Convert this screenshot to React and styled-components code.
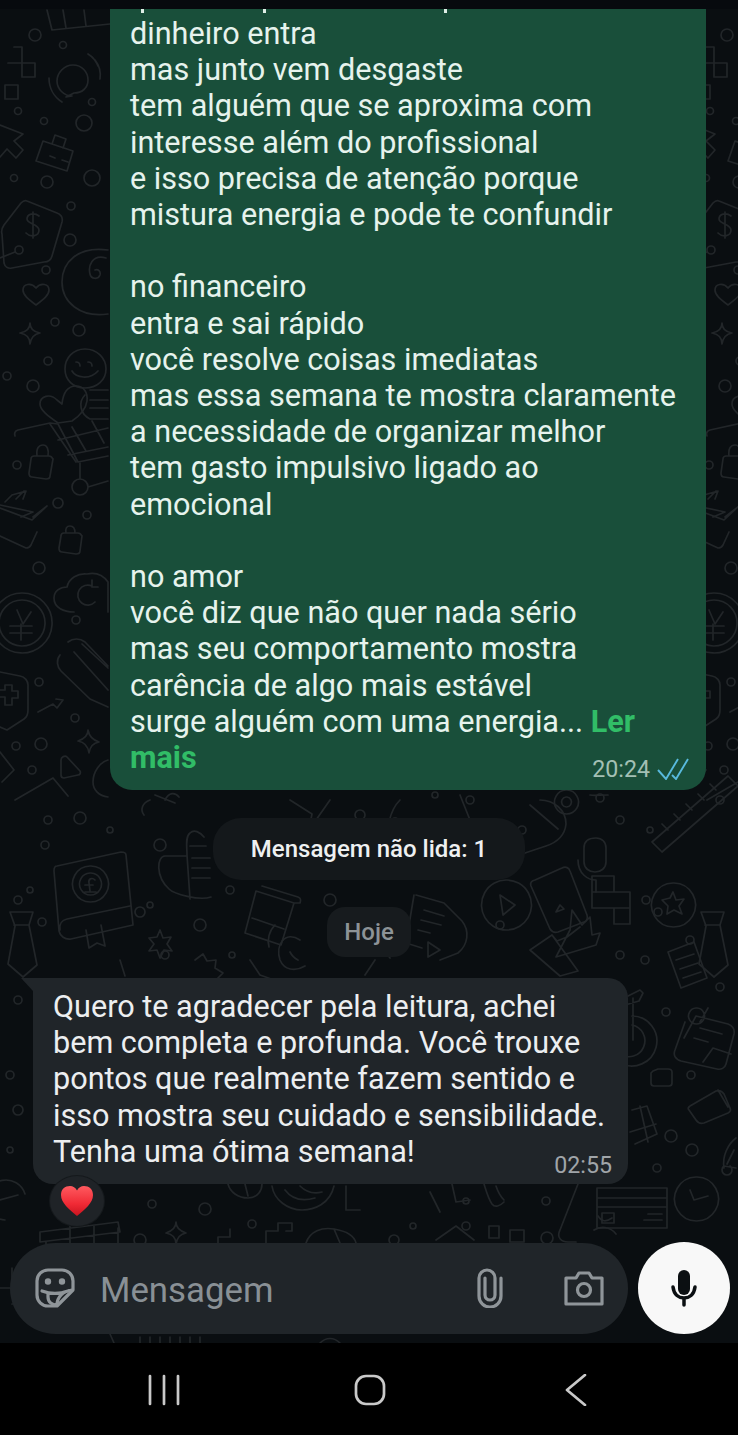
import styled, { createGlobalStyle } from "styled-components";

const GlobalStyle = createGlobalStyle`
  html, body {
    margin: 0;
    padding: 0;
    background: #000;
  }
  * {
    box-sizing: border-box;
  }
`;

const Page = styled.div`
  position: relative;
  width: 738px;
  height: 1435px;
  overflow: hidden;
  display: flex;
  flex-direction: column;
  background: #0a0e11;
  font-family: Roboto, "Liberation Sans", sans-serif;
`;

const Wallpaper = styled.svg`
  position: absolute;
  inset: 0;
  width: 738px;
  height: 1435px;
  fill: none;
  stroke: #222629;
  stroke-width: 1.7;
  stroke-linecap: round;
  stroke-linejoin: round;
`;

const TopStrip = styled.div`
  position: relative;
  height: 9px;
  flex: none;
  background: #070a0e;
`;

const Chat = styled.main`
  position: relative;
  flex: none;
  height: 1233px;
  display: flex;
  flex-direction: column;
`;

const OutBubble = styled.div`
  position: relative;
  align-self: flex-end;
  width: 596px;
  height: 781px;
  margin-right: 32px;
  padding: 7px 20px 0;
  background: #194f3a;
  border-radius: 0 0 22px 22px;
`;

const Descender = styled.span`
  position: absolute;
  top: 0;
  left: ${(p) => p.$left}px;
  width: 3px;
  height: 4px;
  background: #dfeee7;
`;

const Body = styled.div`
  font-size: 30.6px;
  line-height: 36.2px;
  white-space: pre-line;
  color: ${(p) => (p.$incoming ? "#eceef0" : "#e6f3ed")};
`;

const ReadMore = styled.span`
  font-weight: 700;
  color: #31bd67;
`;

const Meta = styled.div`
  position: absolute;
  right: ${(p) => p.$right}px;
  bottom: ${(p) => p.$bottom}px;
  display: flex;
  align-items: center;
  gap: 7px;
  font-size: 23.2px;
  line-height: 26px;
  color: ${(p) => p.$color};
`;

const Pill = styled.div`
  align-self: center;
  display: flex;
  align-items: center;
  justify-content: center;
  flex: none;
  font-weight: 500;
`;

const UnreadPill = styled(Pill)`
  width: 312px;
  height: 62px;
  margin-top: 28px;
  border-radius: 28px;
  background: #14181b;
  color: #eef0f1;
  font-size: 24px;
`;

const DatePill = styled(Pill)`
  width: 84px;
  height: 50px;
  margin-top: 27px;
  border-radius: 18px;
  background: #171b1e;
  color: #8d9397;
  font-size: 24px;
`;

const InBubble = styled.div`
  position: relative;
  width: 595px;
  height: 206px;
  margin: 21px 0 0 33px;
  padding: 11px 20px 0;
  background: #202529;
  border-radius: 0 20px 20px 20px;
  &::before {
    content: "";
    position: absolute;
    top: 0;
    left: -12px;
    border-top: 13px solid #202529;
    border-left: 12px solid transparent;
  }
`;

const Reaction = styled.div`
  position: relative;
  width: 54px;
  height: 50px;
  margin: -8px 0 0 50px;
  display: flex;
  align-items: center;
  justify-content: center;
  border-radius: 50%;
  background: #1f2327;
  box-shadow: 0 0 0 1px #15191c;
`;

const Composer = styled.div`
  position: relative;
  flex: none;
  height: 92px;
  padding: 0 8px 0 10px;
  display: flex;
  align-items: flex-end;
  gap: 10px;
`;

const InputBar = styled.div`
  width: 618px;
  height: 91px;
  padding: 0 24px 1px 25px;
  display: flex;
  align-items: center;
  border-radius: 46px;
  background: #202529;
`;

const Placeholder = styled.span`
  flex: 1;
  margin: 3px 0 0 25px;
  font-size: 34.8px;
  color: #899095;
`;

const IconSlot = styled.svg`
  flex: none;
  fill: none;
  stroke: #8f9599;
  stroke-width: 3.2;
  stroke-linecap: round;
  stroke-linejoin: round;
  margin-left: ${(p) => p.$gap || 0}px;
`;

const MicButton = styled.div`
  width: 92px;
  height: 92px;
  flex: none;
  display: flex;
  align-items: center;
  justify-content: center;
  border-radius: 50%;
  background: #f8f8f8;
`;

const NavBar = styled.nav`
  position: relative;
  flex: none;
  height: 92px;
  margin-top: 9px;
  padding: 2px 0 0 61px;
  display: grid;
  grid-template-columns: repeat(3, 206px);
  align-items: center;
  justify-items: center;
  background: #000;
`;

const NavIcon = styled.svg`
  fill: none;
  stroke: #c9c9c9;
  stroke-width: 2.7;
  stroke-linecap: round;
  stroke-linejoin: round;
`;

const rings = [
  [35, 35, 6], [63, 45, 3.5], [18, 111, 3.5], [44, 121, 3.5], [84, 123, 8], [92, 102, 3.5],
  [14, 178, 3.5], [47, 182, 6], [92, 178, 8], [71, 206, 4], [70, 240, 6], [46, 270, 4],
  [19, 250, 4], [55, 322, 4], [79, 330, 6], [48, 361, 4], [33, 386, 6], [7, 376, 4],
  [17, 465, 4], [87, 515, 4], [58, 503, 5], [39, 568, 6], [76, 620, 4], [39, 682, 4],
  [16, 746, 4], [41, 744, 6], [32, 770, 4], [75, 718, 4],
];

const centerRings = [
  [48, 820, 4], [80, 818, 6], [110, 830, 3], [45, 845, 4], [160, 845, 6], [30, 890, 3],
  [18, 900, 4], [42, 922, 4], [140, 912, 5], [150, 905, 3], [165, 955, 4], [200, 925, 6],
  [230, 890, 4], [232, 955, 3], [420, 850, 4], [465, 865, 6], [500, 925, 4], [522, 830, 4],
  [646, 900, 4], [620, 955, 4], [645, 960, 4], [690, 940, 4], [658, 912, 4], [650, 830, 3],
  [300, 850, 4], [330, 900, 6], [620, 820, 4], [395, 822, 4], [360, 815, 5], [470, 800, 4],
  [435, 795, 3], [720, 800, 4], [600, 798, 4],
];

const lowerRings = [
  [666, 1012, 4], [720, 987, 4], [691, 1075, 4], [671, 1136, 6], [692, 1150, 6], [657, 1168, 4],
  [152, 1204, 4], [205, 1209, 6], [252, 1224, 4], [140, 1240, 6], [466, 1226, 4], [546, 1201, 4],
  [466, 1201, 3], [413, 1226, 3], [394, 1240, 5], [547, 1238, 6], [18, 1000, 4], [10, 1150, 3],
  [10, 1075, 4], [18, 1110, 5],
];

// left side doodles, the wallpaper repeats about every 692px so they get drawn twice
const leftDoodles = [
  "M47 10l5 20 58-6M66 28l-3-18M86 26l-2-16",
  "M14 47h8v16h13v14H22V63H8M5 85h13v14H5z",
  "M72 96c-8 0-15-7-15-15s7-16 16-16 15 7 15 15-6 13-14 13l-8 4zM49 78c0 10 5 19 13 24M95 60c4 5 6 12 5 19M88 54c5 3 8 7 10 12",
  "M0 125l23 9-9 7 9 9-7 8-9-9-7 8",
  "M43 141l30 10-6 20-31-10zM52 144l3-9 11 4-3 9M50 156l5 2M62 160l6 2",
  "M27 201l30 12c5 2 6 5 5 9l-10 34c-1 4-4 6-8 6l-32 6c-4 1-7-1-8-5L2 234c-1-3 0-6 2-9l17-22c2-2 4-3 6-2z",
  "M39 216c-5-4-12-2-12 3s12 5 12 11-8 8-13 3M33 212v26",
  "M0 258l15-6",
  "M36 305c-8-6-13-10-13-15 0-6 8-8 13-2 5-6 13-4 13 2 0 5-5 9-13 15z",
  "M30 323c0 6-4 9-10 10 6 1 10 4 10 11 1-7 4-10 10-11-6-1-10-4-10-10z",
  "M108 250c-30-4-46 12-46 32s18 36 46 32M106 258c-14-4-18 8-16 16 1 5 8 6 10 1 1-4-2-6-5-5",
  "M85 349c-12 0-20 9-20 20s8 19 20 19 21-8 21-19-9-20-21-20zM76 362c3 0 4 2 4 4M88 362c3 0 4 2 4 4M72 371c4 7 18 9 26 0",
  "M58 423c-10-7-18-13-18-19 0-8 10-11 17-4l5 4c1-10 4-18 14-18 8 0 12 7 11 15-1 7-6 14-15 20z",
  "M85 395c-7 7-5 19 5 24h18M90 390h18M90 400h18M90 408h18",
  "M15 436c-1-3 0-5 3-6l32-7 8 1 20 38 30-6M50 424l26 38M58 440l50-12M68 455l40-8M72 427l14 24M92 421l12 22",
  "M80 463v16M72 487a8 8 0 1 0 16 0 8 8 0 1 0-16 0M88 487l20-6",
  "M34 456h15c2 0 3 1 4 3l-3 17c0 2-2 3-4 3l-14-2c-2 0-3-2-3-4l2-14c0-2 2-3 3-3zM37 456c-1-8 2-11 6-11s6 4 5 11",
  "M12 495l14-4-3 8M12 495l-7 7M24 491l-8 8",
  "M0 505l33 7-12 5M33 517l14-11-15 14-32-12M0 536l26 12c2 0 4-1 5-3l6-13",
  "M64 533h14c2 0 3 1 4 3l-2 15c0 2-2 3-4 3l-14-2c-2 0-3-2-3-4l2-12c0-2 1-3 3-3zM66 533c-1-5 1-7 4-7s5 2 5 7",
  "M74 612c-10 0-20-4-20-14 0-7 6-11 13-11 2-9 11-14 20-13 9-2 16 1 21 8v30",
  "M92 586a10 10 0 1 0 3 16M92 580v7h6",
  "M22 593a30 30 0 1 0 30 32 30 30 0 0 0-30-32zM22 600a23 23 0 1 0 23 24 23 23 0 0 0-23-24z",
  "M17 610l6 14 8-12M10 626h22M10 633h22M21 624v16",
  "M68 642c5-4 12-4 17 0l23 24M60 655c-4 5-3 12 1 16l29 28 18 8M74 652l34 38M82 644l26 24",
  "M0 672l20 4c5 1 8 5 8 9v25c0 4-1 7-4 9l-17 11-7-3M0 690h5v-5h7v6h6v7h-6v7H5v-8H0",
  "M38 712l15-8 4 4 6-8-7-1",
  "M88 730c0 6-4 9-10 11 6 1 10 5 11 12 1-7 4-10 10-11-6-2-10-6-11-12z",
  "M67 757l13 14c1 2 0 4-2 4l-14 3c-2 0-3-1-3-3v-15c0-3 4-5 6-3z",
  "M108 760c-8 2-15 12-15 22 0 8 6 14 15 15",
  "M15 800l38-22 15 18",
  "M0 752l14 18-12 12",
];

const centerDoodles = [
  "M57 866l64-14c3 0 5 1 5 3l7 70-62 14c-6 1-11-3-12-8l-5-60c0-3 1-5 3-5zM60 930c-1-6 2-10 7-11l63-13M86 930l3 18 8-5 8 3-4-21",
  "M90 866a18 18 0 1 0 1 0zM90 873a11 11 0 1 0 1 0zM95 880c-3-3-7-1-6 3l1 8M85 885h8M85 892h11",
  "M204 837c-4-5-10-8-14-4-5 4-3 14-3 22l3 44M187 856h-22c-8 0-10 20 4 33 5 5 30 12 42 8M190 846h16M192 858h18M192 868h18M192 878h18",
  "M150 800c-8 3-10 10-6 15M155 795l20 8M165 800c4-8 10-8 14-3",
  "M10 912h23l-4 13 8 40-14 12-15-13 7-38zM14 925h14",
  "M256 891l38 12-13 42-36-12zM262 886l36 11c3 1 3 3 2 6l-6 0M252 918l32 11",
  "M300 940c-15-10-25 5-20 20 4 10 15 12 25 6M290 952c2 4 4 6 8 8M275 925c-6 6-8 15-6 22",
  "M416 895l28 8 18 18c8 10 6 24-4 32l-18 7M414 895l-8 48 16 5M424 910l20 6M421 920l20 5M418 930l12 3M428 942l12 8-12 7z",
  "M535 880l27-12c4-2 7 0 8 3l17 44c1 3 0 6-3 7l-26 10c-3 1-6 0-8-3l-19-43c-1-3 0-5 4-6zM560 905l-4 7 8-3z",
  "M506 880a25 25 0 1 0 1 0zM500 895l15 10-12 10z",
  "M592 876h22v16h16v32h-16v-16h-22zM592 892h22M614 908h16M630 908v-16",
  "M673 883a22 22 0 1 0 1 0zM673 892l3 8 8-1-5 7 3 8-8-4-7 4 1-8-6-6 8-2z",
  "M701 912h23l-4 13 8 40-14 12-15-13 7-38zM705 925h14",
  "M652 842l76-66 10 10M668 830l-6-6M680 820l-6-6M692 810l-6-6M704 800l-6-6M716 790l-6-6M652 842l10 10 76-66",
  "M584 848c0-8 6-10 12-10s10 4 10 10v14c0 6-5 10-11 10s-11-4-11-10zM578 860c0 14 10 20 18 20M596 880v12",
  "M530 950l22-15 26 36-18 5zM552 935l5 6 10-4 13-10M570 930l2-20 10 15 8-8 2 18 8-2-4 12-40 12z",
  "M668 952l26-10 13 36-26 10zM676 960l18-6M680 969l18-6M683 978l18-6",
  "M540 800c14 0 26 10 26 24-1 10-8 18-20 22l-24 8c-12 0-18-8-18-18M530 805l28 24",
  "M566 790a12 12 0 1 0 1 0zM566 797a5 5 0 1 0 1 0zM590 795c4 1 10 0 18 0",
  "M195 960l8-6 4 7 9-1-1 8 8 5-6 6 5 8M160 930l3 8 8-1-4 7 5 7-8-1-4 8-3-8-8 1 5-7-5-6 8-1z",
  "M375 960l-10 15M250 960l10 15 14 5M120 960l5 16M390 940c-7 5-5 12 0 18",
  "M460 795l10 25-20 24M400 800c-10 10-15 30-10 45M330 800l-14 20M290 800l22 14-5 25",
];

const lowerDoodles = [
  "M684 1038l12-22 32 8c5 2 7 5 6 10l-8 30c-1 4-5 6-9 5l-36-8c-6-2-8-6-6-11l10-28M708 1008l-8 14M700 1028l22 6M694 1038l14 4M703 1062l10-14 18 6M696 1008a8 8 0 1 0 1 0z",
  "M632 1016a25 25 0 1 1-12 47M632 1025a16 16 0 1 1-12 29M633 998v42M628 996l12-6 3 3-4 8-14 4",
  "M653 1071l5-2h10c3 0 4 1 4 3v11c0 2-1 3-3 3h-15c-2 0-3-1-3-3v-10z",
  "M690 1106l26-15c3-1 6 0 8 3l6 14c1 2 0 4-2 5l-24 10c-3 1-6 0-8-3l-7-10c-2-2 0-3 1-4zM718 1090l10 17",
  "M632 1110l15-4 10 28-22 10M640 1106l8 36M630 1132l26-8",
  "M736 1138c-8 6-14 18-12 30M736 1168l-12-2a5 5 0 1 0 6 0M734 1150l-7 14",
  "M696 1177a22 22 0 1 0 1 0zM690 1190l4 10 14-4",
  "M597 1188h70v40h-70zM597 1198h70M597 1207h70M602 1213h12v10h-12zM648 1214h14M644 1220h18",
  "M25 1194a20 20 0 1 0-20 26M0 1200l18-5",
  "M228 1184c2 8 10 14 20 14s14-8 14-14M245 1184l3 12M272 1186c2 14 16 24 30 24 12 0 28-6 32-24M285 1190c6 8 16 12 30 8M300 1186c6 6 14 8 22 6",
  "M346 1186v24h14",
  "M40 1232l78-10 2 10-80 10zM46 1242v4M70 1226v20M94 1226v20M118 1228v18",
  "M176 1222c0 6-4 9-10 11 6 1 10 5 10 11 1-6 4-10 10-11-6-2-10-5-10-11z",
  "M218 1243v-6h12v-8M266 1243v-12h12v-8h14v8h-6",
  "M306 1243c4-12 16-16 28-14s20 6 22 14M334 1229l6 14",
  "M12 1288v-20M0 1288h12M12 1304h6",
  "M484 1184c2 6 4 14 8 20 3 4 8 2 12-2M496 1186c2 6 4 10 8 14M452 1184l4 18 14-2M430 1192l10 20",
  "M489 1226h10v12h-10zM510 1230h14v12h-14z",
  "M578 1184l-18 46c-4 8 2 12 8 12h8",
  "M594 1230c6-4 16-4 22 4M598 1216c4 6 8 6 14 2",
  "M436 1240l20-14 18 14",
  "M110 1334l4 9M140 1337v6M150 1337v6M160 1337v6M170 1337v6M180 1337v6M190 1337v6M200 1337v6M320 1343c6-6 14-6 20 0",
];

function Doodles() {
  return (
    <Wallpaper viewBox="0 0 738 1435">
      {[0, 692].map((dx) => (
        <g key={dx} transform={`translate(${dx} 0)`}>
          {leftDoodles.map((d) => (
            <path key={d} d={d} />
          ))}
          {rings.map(([x, y, r]) => (
            <circle key={`${x}-${y}`} cx={x} cy={y} r={r} />
          ))}
        </g>
      ))}
      {[...centerDoodles, ...lowerDoodles].map((d) => (
        <path key={d} d={d} />
      ))}
      {[...centerRings, ...lowerRings].map(([x, y, r]) => (
        <circle key={`${x}-${y}`} cx={x} cy={y} r={r} />
      ))}
    </Wallpaper>
  );
}

const outgoing = `dinheiro entra
mas junto vem desgaste
tem alguém que se aproxima com
interesse além do profissional
e isso precisa de atenção porque
mistura energia e pode te confundir

no financeiro
entra e sai rápido
você resolve coisas imediatas
mas essa semana te mostra claramente
a necessidade de organizar melhor
tem gasto impulsivo ligado ao
emocional

no amor
você diz que não quer nada sério
mas seu comportamento mostra
carência de algo mais estável
surge alguém com uma energia... `;

const incoming = `Quero te agradecer pela leitura, achei
bem completa e profunda. Você trouxe
pontos que realmente fazem sentido e
isso mostra seu cuidado e sensibilidade.
Tenha uma ótima semana!`;

function Heart() {
  return (
    <svg width="34" height="32" viewBox="0 0 34 32">
      <defs>
        <linearGradient id="heartFill" x1="0" y1="0" x2="0" y2="1">
          <stop offset="0" stopColor="#ff5a5f" />
          <stop offset="0.6" stopColor="#f02a35" />
          <stop offset="1" stopColor="#c9141f" />
        </linearGradient>
      </defs>
      <path
        fill="url(#heartFill)"
        d="M17 31C9 24 1 18 1 10 1 4 5 1 10 1c3 0 5.500 1.500 7 4.500C18.500 2.500 21 1 24 1c5 0 9 3 9 9 0 8-8 14-16 21z"
      />
    </svg>
  );
}

export default function App() {
  return (
    <Page>
      <GlobalStyle />
      <Doodles />
      <TopStrip />
      <Chat>
        <OutBubble>
          <Descender $left={31} />
          <Descender $left={153} />
          <Descender $left={334} />
          <Body>
            {outgoing}
            <ReadMore>Ler mais</ReadMore>
          </Body>
          <Meta $right={17} $bottom={8} $color="#a3c0b4">
            20:24
            <svg width="32" height="22" viewBox="0 0 32 22" fill="none" stroke="#58b9dd" strokeWidth="1.9">
              <path d="M1 12l8 9L21 1" />
              <path d="M15 17l4 4L31 1" />
            </svg>
          </Meta>
        </OutBubble>
        <UnreadPill>Mensagem não lida: 1</UnreadPill>
        <DatePill>Hoje</DatePill>
        <InBubble>
          <Body $incoming>{incoming}</Body>
          <Meta $right={16} $bottom={6} $color="#a0a5a9">
            02:55
          </Meta>
        </InBubble>
        <Reaction>
          <Heart />
        </Reaction>
      </Chat>
      <Composer>
        <InputBar>
          <IconSlot width="40" height="40" viewBox="0 0 40 40">
            <path d="M13 2h14a11 11 0 0 1 11 11v9L22 38h-9A11 11 0 0 1 2 27V13A11 11 0 0 1 13 2z" />
            <path d="M7 23c8 3 18 3 26 0M13 25v4c0 5 4 8 9 8M22 37c0-8 6-14 15-15" />
            <circle cx="13" cy="13.500" r="1.600" fill="#8f9599" />
            <circle cx="27" cy="13.500" r="1.600" fill="#8f9599" />
          </IconSlot>
          <Placeholder>Mensagem</Placeholder>
          <IconSlot width="26" height="40" viewBox="0 0 26 40">
            <path d="M24 10v18a11 11 0 0 1-22 0V10a8 8 0 0 1 16 0v17a5 5 0 0 1-10 0V10" />
          </IconSlot>
          <IconSlot $gap={61} width="40" height="36" viewBox="0 0 40 36">
            <path d="M2 8h10l3-5h10l3 5h10v26H2z" />
            <circle cx="20" cy="20" r="6.500" />
          </IconSlot>
        </InputBar>
        <MicButton>
          <svg width="28" height="38" viewBox="0 0 28 38" fill="none" stroke="#0b0f12" strokeWidth="3.500" strokeLinecap="round">
            <rect x="8" y="1" width="12" height="25" rx="6" fill="#0b0f12" stroke="none" />
            <path d="M3 18c1 8 6 11 11 11s10-3 11-11M14 29v7" />
          </svg>
        </MicButton>
      </Composer>
      <NavBar>
        <NavIcon width="32" height="32" viewBox="0 0 32 32">
          <path d="M2 2v28M16 2v28M30 2v28" />
        </NavIcon>
        <NavIcon width="32" height="32" viewBox="0 0 32 32">
          <rect x="2" y="2" width="28" height="28" rx="10" />
        </NavIcon>
        <NavIcon width="22" height="32" viewBox="0 0 22 32">
          <path d="M20 1L2 16l18 15" />
        </NavIcon>
      </NavBar>
    </Page>
  );
}
